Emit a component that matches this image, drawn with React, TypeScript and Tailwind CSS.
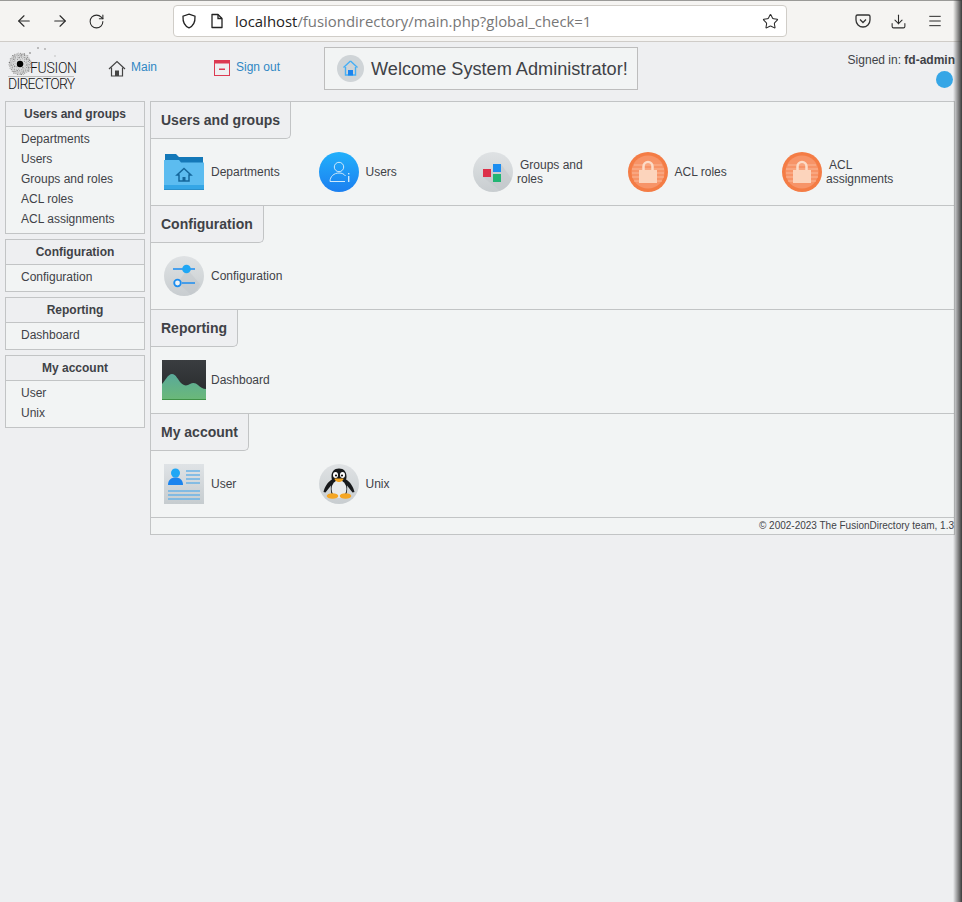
import React from 'react';
import { ArrowLeft, ArrowRight, RotateCw, Download, Menu, Star } from 'lucide-react';

const sections = [
  { title: 'Users and groups', items: ['Departments', 'Users', 'Groups and roles', 'ACL roles', 'ACL assignments'] },
  { title: 'Configuration', items: ['Configuration'] },
  { title: 'Reporting', items: ['Dashboard'] },
  { title: 'My account', items: ['User', 'Unix'] },
];

const Logo = () => (
  <div className="w-[68px] h-[47px] ml-2 shrink-0 flex flex-col text-[#111] font-['Roboto',sans-serif] font-light">
    <div className="flex items-end h-[30px]">
      <svg width="67" height="30" viewBox="0 0 67 30" className="shrink-0 -mr-[45px]">
        <circle cx="12" cy="19" r="11" fill="#c9c9c9" opacity="0.55" />
        {[...Array(110)].map((_, i) => {
          const a = i * 2.4;
          const r = 3.5 + Math.sqrt(i) * 0.75;
          return <circle key={i} cx={12 + Math.cos(a) * r} cy={19 + Math.sin(a) * r} r={i % 3 === 0 ? 0.7 : 0.5} fill={i % 2 ? '#777' : '#aaa'} />;
        })}
        <circle cx="12" cy="19" r="3.200" fill="#000" />
        <circle cx="22" cy="8" r="0.900" fill="#999" />
        <circle cx="30" cy="3" r="1" fill="#aaa" />
        <circle cx="37" cy="4" r="0.900" fill="#aaa" />
        <circle cx="47" cy="11" r="0.800" fill="#bbb" />
      </svg>
      <span className="text-[14px] leading-[13px] tracking-[-0.3px] relative">FUSION</span>
    </div>
    <div className="h-[1px] bg-[#bbb] mt-[1px] w-[66px]" />
    <div className="text-[14px] leading-[15px] tracking-[-0.75px] whitespace-nowrap">DIRECTORY</div>
  </div>
);

const CircleBg = ({ children, id }: { children: React.ReactNode; id: string }) => (
  <svg width="40" height="40" viewBox="0 0 40 40">
    <defs>
      <linearGradient id={id} x1="0" y1="0" x2="0" y2="1">
        <stop offset="0" stopColor="#dfe2e4" />
        <stop offset="1" stopColor="#c8cdd0" />
      </linearGradient>
    </defs>
    <circle cx="20" cy="20" r="20" fill={`url(#${id})`} />
    {children}
  </svg>
);

const DepartmentsIcon = () => (
  <svg width="40" height="40" viewBox="0 0 40 40">
    <path d="M1 2h11l3 3h24v6H1z" fill="#1478b8" />
    <path d="M0 8h15l2 2.500h23V37H0z" fill="#5cbcf0" />
    <path d="M0 33h40v4H0z" fill="#35a6e6" />
    <path d="M0 37h40v1H0z" fill="#2a8fca" />
    <path d="M20 16.500l7 6.500h-2v6h-10v-6h-2z" fill="none" stroke="#14679c" strokeWidth="1.500" />
    <rect x="18.500" y="25" width="3" height="4" fill="#14679c" />
  </svg>
);

const UsersIcon = () => (
  <svg width="40" height="40" viewBox="0 0 40 40">
    <defs>
      <linearGradient id="usersBg" x1="0" y1="0" x2="0" y2="1">
        <stop offset="0" stopColor="#22b0fb" />
        <stop offset="1" stopColor="#1b7ff0" />
      </linearGradient>
    </defs>
    <circle cx="20" cy="20" r="20" fill="url(#usersBg)" />
    <circle cx="20" cy="15" r="4.700" fill="none" stroke="#cfe9fb" strokeWidth="1" />
    <path d="M11 29.500c0-5 4-8.500 9-8.500 3 0 5 1 6.500 3M11 29.500h15" fill="none" stroke="#cfe9fb" strokeWidth="1" />
    <rect x="29" y="24" width="1.400" height="6" fill="#cfe9fb" />
    <rect x="29" y="21" width="1.400" height="1.400" fill="#cfe9fb" />
  </svg>
);

const GroupsIcon = () => (
  <CircleBg id="groupsBg">
    <path d="M28 12L38.500 27A20 20 0 0 1 27 38.700L10 25z" fill="#bfc4c7" opacity="0.45" />
    <rect x="10" y="17" width="8" height="8" fill="#dc2f48" />
    <rect x="20" y="12" width="8" height="8" fill="#1b8df0" />
    <rect x="20" y="22" width="8" height="8" fill="#22b573" />
  </CircleBg>
);

const AclIcon = () => (
  <svg width="40" height="40" viewBox="0 0 40 40">
    <circle cx="20" cy="20" r="20" fill="#f47c45" />
    <circle cx="20" cy="20" r="16.500" fill="#f79468" />
    <path d="M6 13h28M4 17h32M4 21h32M4 25h32M6 29h28" stroke="#fbb796" strokeWidth="1" />
    <path d="M15.500 18v-3.500a4.500 4.500 0 0 1 9 0V18" fill="none" stroke="#fcdcc8" strokeWidth="2.500" />
    <rect x="11" y="18" width="18" height="13" fill="#fcd4bc" />
  </svg>
);

const ConfigIcon = () => (
  <CircleBg id="configBg">
    <path d="M23 13L36 28A20 20 0 0 1 27 38.700L14 27z" fill="#bfc4c7" opacity="0.4" />
    <path d="M9 13h22" stroke="#1b8df0" strokeWidth="1.500" />
    <circle cx="22.500" cy="13" r="4.300" fill="#1fa7f5" />
    <path d="M18 27h13" stroke="#1b8df0" strokeWidth="1.500" />
    <circle cx="13.500" cy="27" r="3.300" fill="#eef2f4" stroke="#1b8df0" strokeWidth="1.800" />
  </CircleBg>
);

const DashboardIcon = () => (
  <svg width="44" height="40" viewBox="0 0 44 40">
    <defs>
      <linearGradient id="dashBg" x1="0" y1="0" x2="0" y2="1">
        <stop offset="0" stopColor="#3a3d40" />
        <stop offset="1" stopColor="#26282a" />
      </linearGradient>
      <linearGradient id="dashFill" x1="0" y1="0" x2="0" y2="1">
        <stop offset="0" stopColor="#5aa99a" />
        <stop offset="1" stopColor="#6bb978" />
      </linearGradient>
    </defs>
    <rect width="44" height="40" fill="url(#dashBg)" />
    <path d="M0 24c3-3 6-10 10-10s6 6 9 9 6 3 9 1 6-1 8 1 5 4 8 4v11H0z" fill="url(#dashFill)" />
    <rect y="39" width="44" height="1" fill="#3f9147" />
  </svg>
);

const UserIcon = () => (
  <svg width="40" height="40" viewBox="0 0 40 40">
    <defs>
      <linearGradient id="userBg" x1="0" y1="0" x2="0" y2="1">
        <stop offset="0" stopColor="#dfe3e6" />
        <stop offset="1" stopColor="#c6cccf" />
      </linearGradient>
    </defs>
    <rect width="40" height="40" fill="url(#userBg)" />
    <circle cx="11.500" cy="9" r="4.500" fill="#1fa7f5" />
    <path d="M4 21c0-5 3-7.500 7.500-7.500S19 16 19 21z" fill="#1b84ee" />
    <path d="M22 7h14M22 11h14M22 15h14M22 19h14M4 27h32M4 31h32M4 35h32" stroke="#6ab2e6" strokeWidth="1.600" />
  </svg>
);

const UnixIcon = () => (
  <CircleBg id="unixBg">
    <path d="M20 4.500c-5 0-7.500 3.500-7.500 8 0 1 .1 2 .4 2.900C9 17.500 5.500 23 4.500 28l2 .5 5.500-7c-.4 3-.2 6.500 1 10h14c1.200-3.500 1.400-7 1-10l5.500 7 2-.5c-1-5-4.500-10.500-8.400-12.600.3-.9.4-1.900.4-2.900 0-4.500-2.500-8-7.500-8z" fill="#17191b" />
    <ellipse cx="20" cy="25" rx="7.500" ry="9" fill="#e8eaeb" />
    <ellipse cx="16.500" cy="11" rx="2.500" ry="3" fill="#fff" />
    <ellipse cx="23.500" cy="11" rx="2.500" ry="3" fill="#fff" />
    <circle cx="17" cy="11.500" r="1.100" fill="#111" />
    <circle cx="23" cy="11.500" r="1.100" fill="#111" />
    <path d="M15.500 14.500h9c0 2-2.500 3.500-4.500 3.500s-4.500-1.500-4.500-3.500z" fill="#f5a623" />
    <ellipse cx="13.500" cy="32" rx="5.800" ry="2.800" fill="#f5a623" />
    <ellipse cx="26.500" cy="32" rx="5.800" ry="2.800" fill="#f5a623" />
  </CircleBg>
);

const mainSections = [
  {
    title: 'Users and groups',
    items: [
      { icon: <DepartmentsIcon />, label: 'Departments' },
      { icon: <UsersIcon />, label: 'Users' },
      { icon: <GroupsIcon />, label: 'Groups and roles', wrap: true },
      { icon: <AclIcon />, label: 'ACL roles' },
      { icon: <AclIcon />, label: 'ACL assignments', wrap: true },
    ],
  },
  { title: 'Configuration', items: [{ icon: <ConfigIcon />, label: 'Configuration' }] },
  { title: 'Reporting', items: [{ icon: <DashboardIcon />, label: 'Dashboard', wide: true }] },
  {
    title: 'My account',
    items: [
      { icon: <UserIcon />, label: 'User' },
      { icon: <UnixIcon />, label: 'Unix' },
    ],
  },
];

const App: React.FC = () => {
  return (
    <div className="relative w-[962px] h-[902px] overflow-hidden bg-[#eeeff1] text-[12px] leading-[20px] text-[#3f4247] font-['Liberation_Sans',sans-serif]">
      {/* Browser toolbar */}
      <div className="h-[42px] bg-[#f5f4f2] border-t border-t-[#9a9a98] border-b border-b-[#cfccc8] flex items-center text-[#2b2b2b]">
        <ArrowLeft className="w-[18px] h-[18px] ml-[15px]" strokeWidth={1.5} />
        <ArrowRight className="w-[18px] h-[18px] ml-[18px]" strokeWidth={1.5} />
        <RotateCw className="w-[17px] h-[17px] ml-[19px]" strokeWidth={1.5} />
        <div className="ml-[68px] w-[614px] h-[32px] bg-white border border-[#d0cdc8] rounded-[4px] flex items-center">
          <svg width="16" height="16" viewBox="0 0 16 16" className="ml-[7px] shrink-0" fill="none" stroke="#222" strokeWidth="1.300">
            <path d="M8 1.200l6 2c.3 5.500-1.500 9.700-6 11.600C3.500 12.900 1.700 8.700 2 3.200z" />
          </svg>
          <svg width="14" height="16" viewBox="0 0 14 16" className="ml-[13px] shrink-0" fill="none" stroke="#222" strokeWidth="1.300">
            <path d="M2 1.500h6l4 4v9H2z" strokeLinejoin="round" />
            <path d="M8 1.500v4h4" />
          </svg>
          <span className="ml-[11px] text-[14.9px] font-['Open_Sans',sans-serif] text-[#222] whitespace-nowrap">
            localhost<span className="text-[#777]">/fusiondirectory/main.php?global_check=1</span>
          </span>
          <Star className="w-[17px] h-[17px] ml-auto mr-[7px]" strokeWidth={1.5} />
        </div>
        <svg width="16" height="16" viewBox="0 0 16 16" className="ml-[68px]" fill="none" stroke="#333" strokeWidth="1.300">
          <path d="M2.500 2h11a1.500 1.500 0 0 1 1.500 1.500V7a7 7 0 0 1-14 0V3.500A1.500 1.500 0 0 1 2.500 2z" />
          <path d="M5 6.500l3 3 3-3" />
        </svg>
        <Download className="w-[17px] h-[17px] ml-[19px]" strokeWidth={1.5} />
        <Menu className="w-[16px] h-[16px] ml-[20px]" strokeWidth={1.5} />
      </div>

      {/* Page header */}
      <div className="h-[59px] flex items-start">
        <div className="mt-[3px] flex"><Logo /></div>
        <div className="ml-[32px] mt-[15px] flex items-start w-[106px]">
          <svg width="18" height="17" viewBox="0 0 18 17" className="shrink-0 mt-[3px]" fill="none" stroke="#444" strokeWidth="1.200">
            <path d="M1 9l8-7.500L17 9" />
            <path d="M3.500 7.500V16h11V7.500" />
            <rect x="7" y="10.500" width="4" height="5.500" fill="#444" stroke="none" />
          </svg>
          <a className="ml-[5px] text-[#2f87c4]">Main</a>
        </div>
        <div className="mt-[15px] flex items-start w-[110px]">
          <svg width="16" height="17" viewBox="0 0 16 17" className="shrink-0 mt-[3px]">
            <rect x="0.500" y="0.500" width="15" height="15" fill="#eeeff1" stroke="#dc3a52" />
            <rect x="0" y="0" width="16" height="3.500" fill="#dc3a52" />
            <rect x="5" y="8.500" width="6" height="1.500" fill="#dc3a52" />
          </svg>
          <a className="ml-[6px] text-[#2f87c4]">Sign out</a>
        </div>
        <div className="mt-[5px] h-[43px] w-[314px] bg-[#f2f4f4] border border-[#bdbdbd] flex items-center">
          <svg width="27" height="27" viewBox="0 0 27 27" className="ml-[12px] shrink-0">
            <circle cx="13.500" cy="13.500" r="13.500" fill="#cfd4d7" />
            <path d="M13.500 6l7 6.500M13.500 6l-7 6.500" stroke="#46aef5" strokeWidth="1.400" />
            <path d="M8.500 12v8h10v-8" fill="none" stroke="#46aef5" strokeWidth="1.400" />
            <rect x="11" y="15" width="5" height="5.500" fill="#1b84ee" />
          </svg>
          <span className="ml-[7px] text-[18.15px] whitespace-nowrap">Welcome System Administrator!</span>
        </div>
        <div className="ml-auto mr-[7px] mt-[8px] flex flex-col items-end">
          <div className="leading-[20px]">Signed in: <b>fd-admin</b></div>
          <div className="w-[17px] h-[17px] mt-[1px] mr-[2px] rounded-full bg-[#36a6e6]" />
        </div>
      </div>

      {/* Body */}
      <div className="flex items-start pl-[5px]">
        <div className="w-[140px] shrink-0 flex flex-col gap-[5px]">
          {sections.map((s) => (
            <div key={s.title} className="border border-[#c2c4c5] bg-[#f2f4f4]">
              <div className="h-[25px] bg-[#eeeff1] border-b border-[#c2c4c5] text-center font-bold leading-[24px]">{s.title}</div>
              <ul className="pt-[2px] pb-[4px] pl-[15px]">
                {s.items.map((it) => (
                  <li key={it} className="h-[20px]">{it}</li>
                ))}
              </ul>
            </div>
          ))}
        </div>

        <div className="ml-[5px] w-[805px] border border-[#c2c4c5] bg-[#f2f4f4]">
          {mainSections.map((s) => (
            <div key={s.title} className="h-[104px] border-b border-[#c2c4c5]">
              <div className="w-fit h-[37px] px-[10px] bg-[#eeeff1] border-r border-b border-[#c2c4c5] rounded-br-[5px] text-[14px] font-bold leading-[36px] whitespace-nowrap">
                {s.title}
              </div>
              <div className="grid grid-cols-[154.5px_154.5px_154.5px_154.5px_154.5px] pl-[13px] mt-[13px]">
                {s.items.map((it) => (
                  <div key={it.label} className="flex items-center h-[40px]">
                    <div className={'wide' in it ? 'w-[40px] shrink-0 -ml-[2px] mr-[2px]' : 'w-[40px] shrink-0'}>{it.icon}</div>
                    {'wrap' in it ? (
                      <span className="ml-[4px] w-[80px] leading-[14px] indent-[3px]">{it.label}</span>
                    ) : (
                      <span className="ml-[7px]">{it.label}</span>
                    )}
                  </div>
                ))}
              </div>
            </div>
          ))}
          <div className="h-[16px] text-right text-[10px] leading-[16px]">© 2002-2023 The FusionDirectory team, 1.3</div>
        </div>
      </div>

      {/* Window shadow on the right edge */}
      <div className="absolute top-0 right-0 bottom-0 w-[9px] bg-gradient-to-r from-transparent to-[#3a3a3a]" />
    </div>
  );
};

export default App;
